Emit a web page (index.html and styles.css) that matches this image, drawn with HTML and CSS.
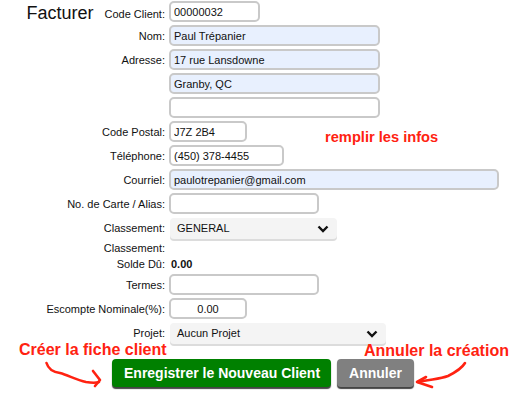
FILE: index.html
```html
<!DOCTYPE html>
<html lang="fr">

<head>
  <meta charset="UTF-8">
  <meta name="viewport" content="width=device-width, initial-scale=1.0">
  <title>Facturer - Nouveau client</title>
  <link rel="stylesheet" href="styles.css">
</head>

<body>
  <div class="page">
    <form class="client-form">
      <label class="lbl first"><span class="title">Facturer</span>Code Client:</label>
      <input class="field w-code" type="text" value="00000032">

      <label class="lbl">Nom:</label>
      <input class="field w-long filled" type="text" value="Paul Trépanier">

      <label class="lbl">Adresse:</label>
      <input class="field w-long filled" type="text" value="17 rue Lansdowne">

      <span></span>
      <input class="field w-long filled" type="text" value="Granby, QC">

      <span></span>
      <input class="field w-long" type="text" value="">

      <label class="lbl">Code Postal:</label>
      <input class="field w-short" type="text" value="J7Z 2B4">

      <label class="lbl">Téléphone:</label>
      <input class="field w-tel" type="text" value="(450) 378-4455">

      <label class="lbl">Courriel:</label>
      <input class="field w-mail filled" type="text" value="paulotrepanier@gmail.com">

      <label class="lbl">No. de Carte / Alias:</label>
      <input class="field w-mid" type="text" value="">

      <label class="lbl">Classement:</label>
      <div class="select w-class">
        <span>GENERAL</span>
        <svg class="chev" width="12" height="8" viewBox="0 0 12 8"><path d="M1.5 1.5 L6 6 L10.5 1.5" fill="none" stroke="#111" stroke-width="2.4"/></svg>
      </div>

      <label class="lbl short">Classement:</label>
      <span class="short"></span>

      <label class="lbl short">Solde Dû:</label>
      <span class="short value">0.00</span>

      <label class="lbl">Termes:</label>
      <input class="field w-mid" type="text" value="">

      <label class="lbl">Escompte Nominale(%):</label>
      <input class="field w-short center" type="text" value="0.00">

      <label class="lbl">Projet:</label>
      <div class="select w-proj">
        <span>Aucun Projet</span>
        <svg class="chev" width="12" height="8" viewBox="0 0 12 8"><path d="M1.5 1.5 L6 6 L10.5 1.5" fill="none" stroke="#111" stroke-width="2.4"/></svg>
      </div>
    </form>

    <div class="actions">
      <button class="btn btn-green" type="button">Enregistrer le Nouveau Client</button>
      <button class="btn btn-grey" type="button">Annuler</button>
    </div>

    <!-- annotations -->
    <p class="note note-fill">remplir les infos</p>
    <p class="note note-create">Créer la fiche client</p>
    <p class="note note-cancel">Annuler la création</p>
    <svg class="arrow arrow-left" width="70" height="40" viewBox="0 0 70 40">
      <path d="M6.5 5 C8 10 12 14 20 15 C28 17 36 22 46 24 C52 25 56 25 59 24" fill="none" stroke="#f21" stroke-width="2.6" stroke-linecap="round"/>
      <path d="M53 13 L60 22 L55 28" fill="none" stroke="#f21" stroke-width="2.6" stroke-linecap="round" stroke-linejoin="round"/>
    </svg>
    <svg class="arrow arrow-right" width="60" height="40" viewBox="0 0 60 40">
      <path d="M55 3 C52 8 46 12 38 16 C30 19 22 19 8 22" fill="none" stroke="#f21" stroke-width="2.6" stroke-linecap="round"/>
      <path d="M16 17 L7 22 L22 27" fill="none" stroke="#f21" stroke-width="2.6" stroke-linecap="round" stroke-linejoin="round"/>
    </svg>
  </div>
</body>

</html>
```

FILE: styles.css
```css
html,
body {
  margin: 0;
  padding: 0;
  background: #fff;
}

body {
  font-family: "Liberation Sans", Arial, sans-serif;
  font-size: 11px;
  color: #111;
}

.page {
  position: relative;
  width: 513px;
  height: 394px;
  padding-top: 1px;
  box-sizing: border-box;
}

.client-form {
  display: grid;
  grid-template-columns: 165px auto;
  column-gap: 4px;
  row-gap: 3px;
  margin: 0;
}

.lbl {
  text-align: right;
  align-self: center;
  white-space: nowrap;
}

.lbl.first {
  display: flex;
  justify-content: flex-end;
  align-items: baseline;
  height: 21px;
  line-height: 13px;
  padding-top: 5px;
  box-sizing: border-box;
  align-self: start;
}

.title {
  font-size: 18px;
  line-height: 13px;
  margin-right: 11px;
  position: relative;
  top: 1px;
}

.short {
  line-height: 13px;
  height: 13px;
}

.value {
  font-weight: bold;
  padding-left: 2px;
}

.field {
  height: 21px;
  box-sizing: border-box;
  border: 2px solid #c9c9c9;
  border-radius: 5px;
  padding: 0 3px;
  font-family: "Liberation Sans", Arial, sans-serif;
  font-size: 11px;
  color: #111;
  background: #fff;
  outline: none;
}

.field.filled {
  background: #e8f0fe;
}

.field.center {
  text-align: center;
}

.w-code { width: 91px; }
.w-long { width: 211px; }
.w-short { width: 78px; }
.w-tel { width: 115px; }
.w-mail { width: 330px; }
.w-mid { width: 150px; }
.w-class { width: 167px; margin: 1px 0 0 1px; }
.w-proj { width: 216px; margin: 1px 0 0 1px; }

.select {
  display: flex;
  align-items: center;
  justify-content: space-between;
  height: 21px;
  box-sizing: border-box;
  padding: 0 8px 0 7px;
  background: #f4f4f4;
  border-radius: 4px;
  box-shadow: 0 2px 0 #dcdcdc;
}

.select span {
  line-height: 19px;
}

.chev {
  display: block;
}

.actions {
  display: flex;
  gap: 6px;
  margin-top: 15px;
  padding-left: 112px;
}

.btn {
  height: 28px;
  border: none;
  border-radius: 4px;
  color: #fff;
  font-family: "Liberation Sans", Arial, sans-serif;
  font-size: 14px;
  font-weight: bold;
  box-shadow: 0 2px 1px #444;
  cursor: pointer;
}

.btn-green {
  background: #008000;
  padding: 0 11px 0 12px;
}

.btn-grey {
  background: #808080;
  padding: 0 12px;
}

/* red notes drawn over the form */
.note {
  position: absolute;
  margin: 0;
  color: #f21;
  font-weight: bold;
  white-space: nowrap;
}

.note-fill {
  left: 325px;
  top: 129px;
  font-size: 14.67px;
}

.note-create {
  left: 19px;
  top: 341px;
  font-size: 16px;
}

.note-cancel {
  left: 364px;
  top: 342px;
  font-size: 16px;
}

.arrow {
  position: absolute;
}

.arrow-left {
  left: 40px;
  top: 358px;
}

.arrow-right {
  left: 410px;
  top: 360px;
}
```
